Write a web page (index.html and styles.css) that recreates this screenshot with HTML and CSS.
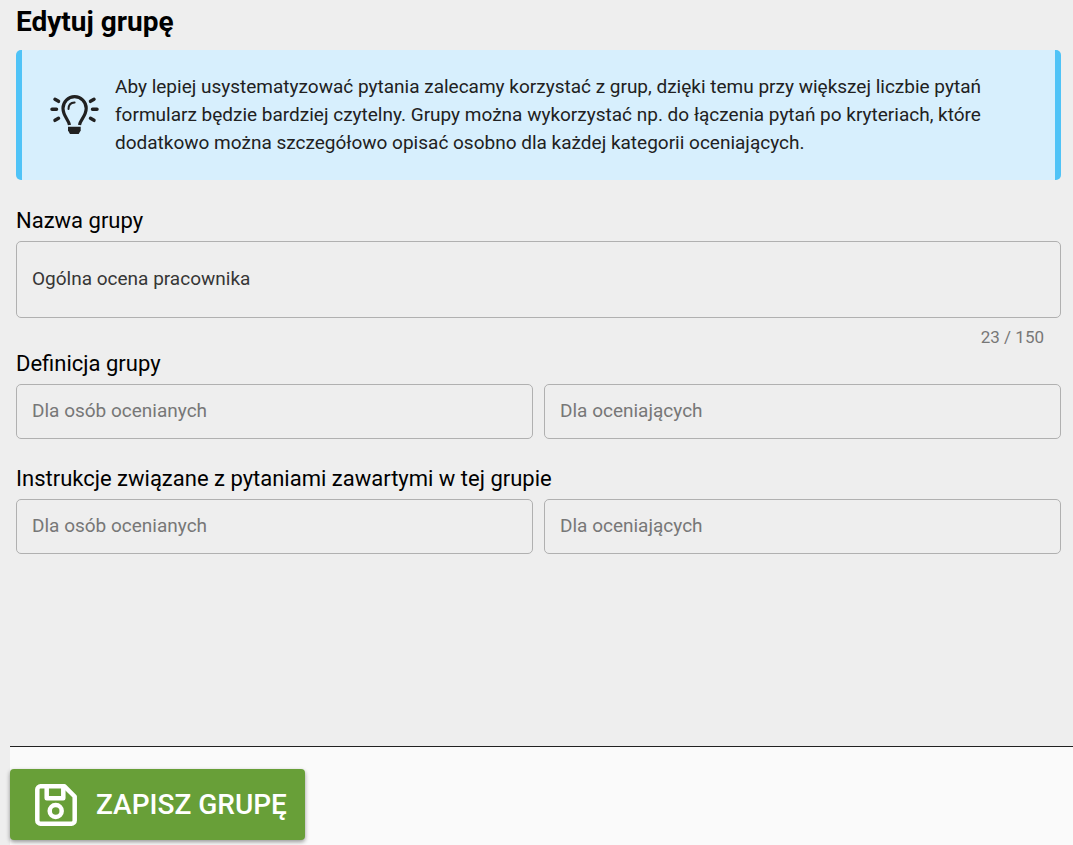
FILE: index.html
```
<!DOCTYPE html>
<html lang="pl">
<head>
    <meta charset="UTF-8">
    <meta name="viewport" content="width=device-width, initial-scale=1.0">
    <title>Edytuj grupę</title>
    <link rel="stylesheet" href="styles.css">
</head>
<body>
    <form class="group-form">
        <main class="form-content">
            <h1>Edytuj grupę</h1>
            <div class="info-box">
                <svg class="info-icon" viewBox="0 0 50 40" aria-hidden="true">
                    <g fill="none" stroke="#212121" stroke-linecap="round">
                        <path stroke-width="3.200" stroke-linecap="butt" d="M19.500 30C18.500 24.500 13 21 13 13.300a11.600 11.600 0 0 1 23.200 0C36.200 21 30.500 24.500 29.500 30"/>
                        <path stroke-width="2" d="M18.500 14c0-4 2.600-6.300 6.100-6.500"/>
                        <path stroke-width="3.500" d="M2 14.300h4.500M42.500 14.300h4.500M5 4.300l3.500 2M44 4.300l-3.500 2M5 25.300l3.500-2M44 25.300l-3.500-2"/>
                    </g>
                    <path fill="#212121" d="M18 31.700h12.700v3.800l-2 3.400h-8.700l-2-3.400z"/>
                </svg>
                <p>Aby lepiej usystematyzować pytania zalecamy korzystać z grup, dzięki temu przy większej liczbie pytań formularz będzie bardziej czytelny. Grupy można wykorzystać np. do łączenia pytań po kryteriach, które dodatkowo można szczegółowo opisać osobno dla każdej kategorii oceniających.</p>
            </div>

            <div class="form-group">
                <label for="nazwa">Nazwa grupy</label>
                <input class="input-large" type="text" id="nazwa" maxlength="150" value="Ogólna ocena pracownika">
                <div class="counter">23 / 150</div>
            </div>

            <fieldset class="form-group definition">
                <legend>Definicja grupy</legend>
                <div class="row">
                    <input type="text" placeholder="Dla osób ocenianych" aria-label="Definicja dla osób ocenianych">
                    <input type="text" placeholder="Dla oceniających" aria-label="Definicja dla oceniających">
                </div>
            </fieldset>

            <fieldset class="form-group">
                <legend>Instrukcje związane z pytaniami zawartymi w tej grupie</legend>
                <div class="row">
                    <input type="text" placeholder="Dla osób ocenianych" aria-label="Instrukcje dla osób ocenianych">
                    <input type="text" placeholder="Dla oceniających" aria-label="Instrukcje dla oceniających">
                </div>
            </fieldset>
        </main>

        <footer class="form-footer">
            <button class="save-button" type="button">
                <svg class="save-icon" viewBox="0 0 42 42" aria-hidden="true">
                    <g fill="none" stroke="#fff" stroke-width="4.500">
                        <path stroke-linejoin="round" d="M5.500 2.300H29.500L39.700 12.500v24a3.200 3.200 0 0 1-3.200 3.200H5.500a3.200 3.200 0 0 1-3.200-3.200V5.500a3.200 3.200 0 0 1 3.200-3.200z"/>
                        <path stroke-linejoin="round" d="M11.700 3v11.300h16.600V3"/>
                        <circle cx="20.700" cy="27" r="6"/>
                    </g>
                </svg>
                ZAPISZ GRUPĘ
            </button>
        </footer>
    </form>
</body>
</html>
```
FILE: styles.css
```
* {
    box-sizing: border-box;
}
body {
    margin: 0;
    font-family: Roboto, sans-serif;
    background-color: #eee;
    color: #000;
}
.group-form {
    display: flex;
    flex-direction: column;
    min-height: 100vh;
}
.form-content {
    flex: 1;
    padding: 4px 12px 24px 16px;
}
h1 {
    margin: 0 0 10px;
    font-size: 28px;
    line-height: 36px;
    font-weight: 700;
}
.info-box {
    display: flex;
    align-items: center;
    gap: 15px;
    margin-bottom: 25px;
    padding: 23px 28px;
    border-left: 6px solid #4fc3f7;
    border-right: 6px solid #4fc3f7;
    border-radius: 5px;
    background-color: #d7effd;
}
.info-icon {
    flex: none;
    width: 50px;
    height: 40px;
}
.info-box p {
    margin: 0;
    font-size: 19px;
    line-height: 28px;
    color: #212121;
}
.form-group {
    margin: 0;
    padding: 0;
    border: 0;
    min-width: 0;
}
.form-group label,
.form-group legend {
    display: block;
    padding: 0;
    margin-bottom: 4px;
    font-size: 22px;
    line-height: 32px;
}
.definition {
    margin-bottom: 24px;
}
.form-group input {
    display: block;
    width: 100%;
    height: 55px;
    padding: 0 15px 2px;
    border: 1px solid #b0b0b0;
    border-radius: 5px;
    background-color: transparent;
    font-family: inherit;
    font-size: 19px;
    color: #363636;
}
.form-group input::placeholder {
    color: #777;
    opacity: 1;
}
.form-group .input-large {
    height: 77px;
}
.counter {
    padding: 8px 17px 0;
    font-size: 17px;
    line-height: 22px;
    text-align: right;
    color: #777;
}
.row {
    display: grid;
    grid-template-columns: 1fr 1fr;
    gap: 11px;
}
.form-footer {
    margin-left: 10px;
    padding: 22px 0 5px;
    border-top: 1px solid #212121;
    background-color: #fafafa;
}
.save-button {
    display: flex;
    align-items: center;
    gap: 19px;
    height: 71px;
    padding: 0 18px 0 25px;
    border: none;
    border-radius: 4px;
    background-color: #689f38;
    box-shadow: 0 2px 4px rgba(0, 0, 0, 0.4);
    color: #fff;
    font-family: inherit;
    font-size: 28px;
    font-weight: 500;
    cursor: pointer;
}
.save-button:hover {
    background-color: #5c9130;
}
.save-icon {
    width: 42px;
    height: 42px;
}
```
